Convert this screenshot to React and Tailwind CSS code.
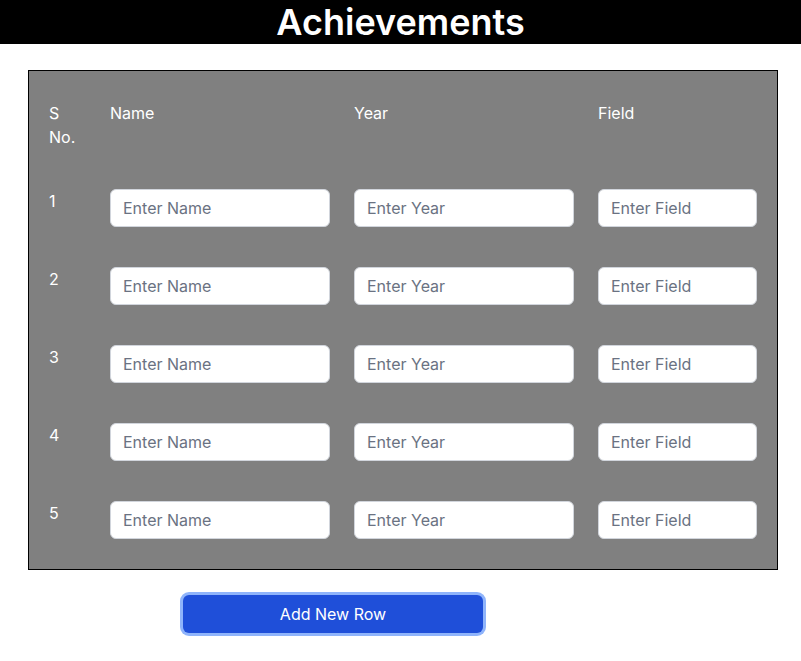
import { useState } from "react";

const font = { fontFamily: "Inter, 'Noto Sans', sans-serif" };

const Row = ({ n }) => (
  <>
    <div className="px-3 py-5 text-white">{n}</div>
    <div className="px-3 py-5">
      <input
        className="w-full h-[38px] bg-white border border-gray-300 rounded-md px-3 text-base text-gray-900 placeholder:text-gray-500 outline-none"
        placeholder="Enter Name"
      />
    </div>
    <div className="px-3 py-5">
      <input
        className="w-full h-[38px] bg-white border border-gray-300 rounded-md px-3 text-base text-gray-900 placeholder:text-gray-500 outline-none"
        placeholder="Enter Year"
      />
    </div>
    <div className="px-3 py-5">
      <input
        className="w-full h-[38px] bg-white border border-gray-300 rounded-md px-3 text-base text-gray-900 placeholder:text-gray-500 outline-none"
        placeholder="Enter Field"
      />
    </div>
  </>
);

export default function App() {
  const [rows, setRows] = useState([1, 2, 3, 4, 5]);

  return (
    <div className="w-[801px] min-h-[661px] bg-white" style={font}>
      {/* Title bar */}
      <div className="h-11 bg-black flex items-center justify-center">
        <h1 className="text-4xl font-semibold text-white leading-10">Achievements</h1>
      </div>

      {/* Table */}
      <div className="ml-7 mt-[26px] w-[750px] border border-black bg-[#808080] px-2 pt-[10px] pb-[10px]">
        <div className="grid grid-cols-[61px_244px_244px_183px] text-base leading-6 text-white">
          <div className="px-3 py-5">S No.</div>
          <div className="px-3 py-5">Name</div>
          <div className="px-3 py-5">Year</div>
          <div className="px-3 py-5">Field</div>
          {rows.map((n) => (
            <Row key={n} n={n} />
          ))}
        </div>
      </div>

      <button
        onClick={() => setRows([...rows, rows.length + 1])}
        className="ml-[183px] mt-[25px] w-[300px] h-[38px] bg-[#1f4fd9] text-white text-base rounded-md ring-[3px] ring-[#8fb4fb]"
      >
        Add New Row
      </button>
    </div>
  );
}
